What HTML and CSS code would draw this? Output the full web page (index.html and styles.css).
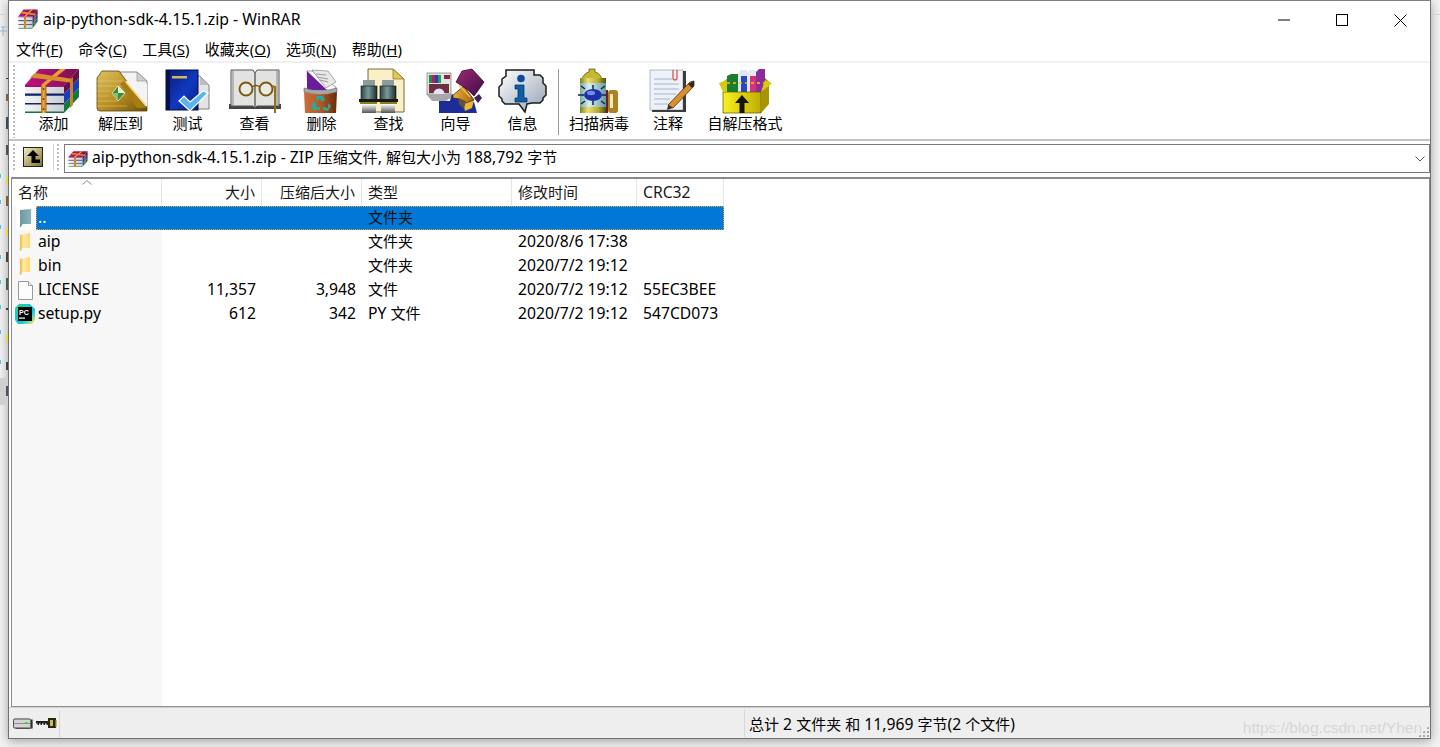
FILE: index.html
```html
<!DOCTYPE html>
<html lang="zh-CN">
<head>
<meta charset="utf-8">
<title>aip-python-sdk-4.15.1.zip - WinRAR</title>
<link rel="stylesheet" href="styles.css">
</head>
<body>
<svg class="defs" width="0" height="0" aria-hidden="true">
  <defs>
    <linearGradient id="gMag" x1="0" y1="0" x2="1" y2="0"><stop offset="0" stop-color="#c0127e"/><stop offset="1" stop-color="#7a1050"/></linearGradient>
    <linearGradient id="gStrap" x1="0" y1="0" x2="1" y2="0"><stop offset="0" stop-color="#b86c10"/><stop offset=".5" stop-color="#f0b040"/><stop offset="1" stop-color="#a86010"/></linearGradient>
    <linearGradient id="gPage" x1="0" y1="0" x2="1" y2="0"><stop offset="0" stop-color="#f4f4f4"/><stop offset="1" stop-color="#c8ccd4"/></linearGradient>
    <linearGradient id="gGold" x1="0" y1="0" x2="1" y2="1"><stop offset="0" stop-color="#dcc060"/><stop offset=".55" stop-color="#b88c20"/><stop offset="1" stop-color="#6c4e08"/></linearGradient>
    <linearGradient id="gNavy" x1="0" y1="0" x2="1" y2="1"><stop offset="0" stop-color="#0a1a70"/><stop offset=".55" stop-color="#1038c0"/><stop offset="1" stop-color="#082080"/></linearGradient>
    <linearGradient id="gBin" x1="0" y1="0" x2="1" y2="0"><stop offset="0" stop-color="#c87040"/><stop offset=".5" stop-color="#b05828"/><stop offset="1" stop-color="#682c0a"/></linearGradient>
    <linearGradient id="gBino" x1="0" y1="0" x2="1" y2="0"><stop offset="0" stop-color="#2c4444"/><stop offset=".45" stop-color="#7a9a9a"/><stop offset="1" stop-color="#1c2c2c"/></linearGradient>
    <linearGradient id="gLens" x1="0" y1="0" x2="0" y2="1"><stop offset="0" stop-color="#fff"/><stop offset="1" stop-color="#555"/></linearGradient>
    <linearGradient id="gBubble" x1="0" y1="0" x2="1" y2="1"><stop offset="0" stop-color="#fff"/><stop offset="1" stop-color="#94a2b4"/></linearGradient>
    <linearGradient id="gCan" x1="0" y1="0" x2="1" y2="0"><stop offset="0" stop-color="#80801c"/><stop offset=".3" stop-color="#e8e070"/><stop offset=".7" stop-color="#b8ac30"/><stop offset="1" stop-color="#505008"/></linearGradient>
    <linearGradient id="gLabel" x1="0" y1="0" x2="1" y2="0"><stop offset="0" stop-color="#78a8a0"/><stop offset=".35" stop-color="#d8f0f0"/><stop offset="1" stop-color="#6898a0"/></linearGradient>
    <linearGradient id="gTurban" x1="0" y1="0" x2="1" y2="1"><stop offset="0" stop-color="#a02878"/><stop offset="1" stop-color="#400c48"/></linearGradient>
    <linearGradient id="gFace" x1="0" y1="0" x2="1" y2="0"><stop offset="0" stop-color="#f0b040"/><stop offset="1" stop-color="#a06010"/></linearGradient>
    <linearGradient id="gBox" x1="0" y1="0" x2="1" y2="0"><stop offset="0" stop-color="#f8f020"/><stop offset="1" stop-color="#c0ae00"/></linearGradient>
    <linearGradient id="gFolder" x1="0" y1="0" x2="1" y2="0"><stop offset="0" stop-color="#e8b848"/><stop offset=".35" stop-color="#ffe9a0"/><stop offset="1" stop-color="#fbd877"/></linearGradient>
    <linearGradient id="gUpFolder" x1="0" y1="0" x2="1" y2="0"><stop offset="0" stop-color="#6c9aa0"/><stop offset="1" stop-color="#8ab4b8"/></linearGradient>
    <linearGradient id="gUp" x1="0" y1="0" x2="1" y2="1"><stop offset="0" stop-color="#f4eec0"/><stop offset="1" stop-color="#807028"/></linearGradient>
    <linearGradient id="gPcHex" x1="0" y1="0" x2="1" y2="1"><stop offset="0" stop-color="#21d789"/><stop offset=".6" stop-color="#07c3f2"/><stop offset="1" stop-color="#fcf84a"/></linearGradient>

    <symbol id="rar" viewBox="0 0 56 46" preserveAspectRatio="none">
      <path d="M1 17 15 1h40l-15 16z" fill="url(#gMag)"/>
      <path d="M40 17 55 1v9L40 26z" fill="#6a1048"/>
      <path d="M40 26 55 10v10L40 36z" fill="#1c3cb8"/>
      <path d="M40 36 55 20v9L40 45z" fill="#107a3c"/>
      <rect x="1" y="17" width="39" height="28" fill="url(#gPage)"/>
      <rect x="1" y="17" width="39" height="2" fill="#a81070"/>
      <rect x="1" y="25.500" width="39" height="1.500" fill="#23234a"/>
      <rect x="1" y="27" width="39" height="1" fill="#3050b0"/>
      <rect x="1" y="35" width="39" height="1.500" fill="#23234a"/>
      <rect x="1" y="43.500" width="39" height="1.500" fill="#1e7040"/>
      <path d="M36 1h6L22 17h-5z" fill="#e8a030"/>
      <path d="M6 9.500 11 5l38 6-3 3.500z" fill="#d8902c"/>
      <rect x="17" y="17" width="5.500" height="28" fill="url(#gStrap)"/>
      <path d="M46 12l3-3v28l-3 3z" fill="#c88428"/>
      <circle cx="19.500" cy="21" r="1" fill="#704008"/><circle cx="19.500" cy="31" r="1" fill="#704008"/><circle cx="19.500" cy="41" r="1" fill="#704008"/>
    </symbol>

    <symbol id="ico-extract" viewBox="0 0 56 46">
      <path d="M27 4h17l10 9v26L27 12z" fill="#f2f2f2" stroke="#8a8a8a"/>
      <path d="M44 4v9h10z" fill="#cfcfcf" stroke="#8a8a8a" stroke-width=".6"/>
      <path d="M4 10 9 3h17l6 8 22 28v4H7q-3 0-3-3z" fill="url(#gGold)" stroke="#5a4408" stroke-width=".8"/>
      <path d="M4 13h26M4 18h28M4 23h14M4 28h12M4 33h20M4 38h30" stroke="#e8d490" stroke-width=".8" opacity=".6"/>
      <path d="M32 13 54 16v23z" fill="#f4f4f4"/>
      <path d="M31 13 53 40h-9L27 16z" fill="#a87c14"/>
      <path d="M33 14 53 38" stroke="#f0d878" stroke-width="1.500"/>
      <path d="M19 25 25 18l7 7-7 8z" fill="#3c8a3c" stroke="#f0f0e0" stroke-width=".8"/>
      <path d="M25 18l7 7h-7z" fill="#e4f4d8"/>
      <path d="M19 25h6v8z" fill="#88c068"/>
    </symbol>

    <symbol id="ico-test" viewBox="0 0 56 46">
      <path d="M34 8h6l9 9v24H34z" fill="#e4e4e4" stroke="#808080"/>
      <path d="M40 8v9h9z" fill="#bcbcbc"/>
      <rect x="6" y="2" width="32" height="40" fill="url(#gNavy)" stroke="#040c48"/>
      <rect x="6" y="2" width="4" height="40" fill="#06104c"/>
      <rect x="12" y="8" width="15" height="2.500" fill="#d0b860"/>
      <path d="M19 33 24 28l6 6 13-11 5 2-18 18z" fill="#5ab4f0" stroke="#fff" stroke-width="1.200"/>
    </symbol>

    <symbol id="ico-view" viewBox="0 0 56 46">
      <rect x="2" y="36" width="52" height="5" fill="#444"/>
      <path d="M4 2h22l2 3 2-3h22v36H30l-2 2-2-2H4z" fill="#e2e2e0" stroke="#555"/>
      <path d="M28 5v34" stroke="#666" stroke-width="1.500"/>
      <path d="M6 2v36M50 2v36" stroke="#888"/>
      <circle cx="19" cy="21" r="6.500" fill="#f4f4ec" fill-opacity=".5" stroke="#7a5c10" stroke-width="2"/>
      <circle cx="39" cy="21" r="6.500" fill="#f4f4ec" fill-opacity=".5" stroke="#7a5c10" stroke-width="2"/>
      <path d="M25 19q4-3 8 0" fill="none" stroke="#7a5c10" stroke-width="1.500"/>
      <path d="M45 18l3 1v26" fill="none" stroke="#907018" stroke-width="2"/>
    </symbol>

    <symbol id="ico-delete" viewBox="0 0 56 46">
      <path d="M13 3h5l24 16-3 7H14z" fill="#fff" stroke="#666" stroke-width=".6"/>
      <path d="M13 3l20 19H13z" fill="#6a1c9c"/>
      <path d="M18 2 34 3l8 11-10 6z" fill="#e8e8e8" stroke="#888" stroke-width=".7"/>
      <path d="M22 6l10 1M23 9l11 2M26 12l8 2" stroke="#999"/>
      <path d="M10 20q16 5 33 0v4q-16 5-33 0z" fill="#a8a8a8" stroke="#666" stroke-width=".6"/>
      <path d="M10 24q16 5 33 0l-1 21H11z" fill="url(#gBin)"/>
      <path d="M22 28h7l2 4-3 2-2-3-3 2zM17 38l3-5 3 3-2 3h5v3h-7zM34 35l3 3-3 5-5-1v-3l5 1z" fill="#30a890"/>
    </symbol>

    <symbol id="ico-find" viewBox="0 0 56 46">
      <path d="M9 1h25l11 10v33H9z" fill="#fbefc8" stroke="#776a40"/>
      <path d="M34 1v10h11z" fill="#e8c848" stroke="#776a40" stroke-width=".7"/>
      <rect x="4" y="12" width="12" height="7" fill="#8a9c9c"/><rect x="23" y="12" width="12" height="7" fill="#8a9c9c"/>
      <rect x="2" y="18" width="16" height="16" fill="url(#gBino)" stroke="#101010" stroke-width=".6"/>
      <rect x="21" y="18" width="16" height="16" fill="url(#gBino)" stroke="#101010" stroke-width=".6"/>
      <rect x="0" y="31" width="39" height="3" fill="#1a1a10"/>
      <rect x="1" y="34" width="17" height="2" fill="#8a8020"/><rect x="21" y="34" width="17" height="2" fill="#8a8020"/>
      <rect x="3" y="36" width="14" height="9" fill="url(#gLens)"/><rect x="22" y="36" width="14" height="9" fill="url(#gLens)"/>
    </symbol>

    <symbol id="ico-wizard" viewBox="0 0 60 46">
      <rect x="1" y="5" width="24" height="21" fill="#e4e4d8" stroke="#777" stroke-width=".7"/>
      <rect x="3" y="7" width="3" height="8" fill="#1c8c48"/><rect x="6" y="7" width="3" height="8" fill="#c02050"/><rect x="9" y="7" width="3" height="8" fill="#2040c0"/><rect x="12" y="7" width="3" height="8" fill="#20a060"/>
      <rect x="18" y="7" width="6" height="4" fill="#902050"/>
      <rect x="3" y="16" width="20" height="9" fill="#6c3040"/>
      <circle cx="13" cy="26" r="5.500" fill="#e8e0f8"/>
      <path d="M0 26h26v3L20 33H6z" fill="#a8a8a8"/>
      <path d="M13 33h12v12H13z" fill="#1c2c90"/>
      <path d="M26 26l10 8 12 0 3 11H20z" fill="#1c2c98"/>
      <path d="M36 32h12l-2 8-7 3z" fill="#e8b838"/>
      <path d="M27 27 38 18l10 14-8 3-6-4-7-1z" fill="url(#gFace)" stroke="#3a2008" stroke-width=".7"/>
      <path d="M32 30l8 3-2 8-5-5z" fill="#605040"/>
      <path d="M30 14 36 3l10-2 12 13-7 10-3 4-6-6z" fill="url(#gTurban)" stroke="#200420" stroke-width=".7"/>
      <path d="M33 17 44 29" stroke="#e8c040" stroke-width="1.500"/>
      <path d="M48 30l5-4 3 4-4 5z" fill="#40205c"/>
    </symbol>

    <symbol id="ico-info" viewBox="0 0 56 46">
      <path d="M13 2h28v5h6l3 3v5l3 3v9l-3 3v2l-3 3h-8l-5 1-2 8-6-8H12l-3-3v-2l-3-3v-9l3-3v-5l4-3z" fill="url(#gBubble)" stroke="#1c1c1c" stroke-width="1.500"/>
      <circle cx="28" cy="10.500" r="3.800" fill="#10489c"/>
      <path d="M22 17h9v13h3v4H22v-4h3v-9h-3z" fill="#0c60a8" stroke="#082860" stroke-width=".7"/>
    </symbol>

    <symbol id="ico-scan" viewBox="0 0 56 46">
      <path d="M11 11q2-6 7-7V1h6v3q5 1 7 7z" fill="#c8b830" stroke="#4a4808" stroke-width=".7"/>
      <rect x="9" y="10" width="26" height="35" fill="url(#gCan)"/>
      <rect x="9" y="15" width="26" height="24" fill="url(#gLabel)"/>
      <ellipse cx="22" cy="27" rx="9" ry="6" fill="#1c30a8"/>
      <ellipse cx="20" cy="25" rx="4" ry="2.200" fill="#7090f0"/>
      <path d="M14 21l-4-3M22 21v-4M30 21l4-3M13 27H7M31 27h6M14 33l-4 3M22 33v4M30 33l4 3" stroke="#182050" stroke-width="1.500"/>
      <rect x="35" y="22" width="2" height="23" fill="#6a1c28"/>
      <rect x="37" y="22" width="10" height="23" rx="3" fill="#b08020"/>
      <rect x="39" y="26" width="3" height="14" fill="#e8f0c0"/>
    </symbol>

    <symbol id="ico-note" viewBox="0 0 56 46">
      <rect x="12" y="4" width="2" height="40" fill="#555"/>
      <path d="M10 2h33v40H10z" fill="#eef2f8" stroke="#a0a8b4" stroke-width=".8"/>
      <path d="M43 3h3v41H12v-2h31z" fill="#3c3c3c"/>
      <path d="M14 11h18M14 16h25M14 21h25M14 26h22M14 31h16M14 36h14" stroke="#9cb4d0"/>
      <path d="M33 2v8q0 2 2 2t2-2V2" fill="none" stroke="#d05040" stroke-width="1.200"/>
      <path d="M28 37 50 14l4-1v5L33 40z" fill="#d89030" stroke="#4a2c08" stroke-width=".8"/>
      <path d="M28 37l5 3-6 2z" fill="#333"/>
      <path d="M48 16l4 4 2-2v-5z" fill="#2a2a2a"/>
    </symbol>

    <symbol id="ico-sfx" viewBox="0 0 56 46">
      <path d="M6 14 14 8h32l6 6-6 9H12z" fill="#8a7400"/>
      <path d="M10 8l4-2h7v20H10z" fill="#1c7c30"/>
      <path d="M21 6l3-4h6v24h-9z" fill="#e4e4f0"/>
      <path d="M24 8h6v18h-6z" fill="#2848c0"/>
      <path d="M30 4l3-2h6v24h-9z" fill="#e8e8f0"/>
      <path d="M33 8h6v18h-6z" fill="#d83080"/>
      <path d="M39 4l3-3h6v24h-9z" fill="#8c2c9c"/>
      <path d="M10 15h38" stroke="#f0c820" stroke-width="1.600" stroke-dasharray="3 3"/>
      <path d="M6 24h38v21H6z" fill="url(#gBox)" stroke="#5a5000" stroke-width=".7"/>
      <path d="M44 24l8-8v20l-8 9z" fill="#a89400"/>
      <path d="M2 15 10 12v12H6zM44 24l4-12 7 3-3 3z" fill="#d8c810"/>
      <path d="M18 35l7-8 7 8h-4.500v10h-5V35z" fill="#141408"/>
    </symbol>
  </defs>
</svg>

<svg class="desk-marks" width="8" height="747" viewBox="0 0 8 747" aria-hidden="true">
  <rect x="0" y="14" width="8" height="1" fill="#d0d0d0"/>
  <path d="M1 27h5M3 27v9M0 31h7" stroke="#9cb0c4" fill="none"/>
  <rect x="0" y="378" width="8" height="27" fill="#d0d0d0"/>
  <rect x="6" y="78" width="2" height="1" fill="#5a3010"/><rect x="6" y="94" width="2" height="7" fill="#806040"/>
  <rect x="6" y="117" width="2" height="12" fill="#3a4a60"/><rect x="6" y="145" width="2" height="10" fill="#505050"/>
  <rect x="0" y="174" width="1" height="4" fill="#40c8f0"/><rect x="6" y="177" width="2" height="7" fill="#e8d840"/>
  <rect x="0" y="200" width="1" height="4" fill="#40c8f0"/><rect x="6" y="196" width="2" height="10" fill="#806030"/>
  <rect x="0" y="225" width="1" height="4" fill="#40c8f0"/><rect x="6" y="228" width="2" height="8" fill="#e8d840"/>
  <rect x="0" y="255" width="1" height="4" fill="#40c8f0"/><rect x="6" y="252" width="2" height="10" fill="#504030"/>
  <rect x="0" y="280" width="1" height="4" fill="#40c8f0"/><rect x="6" y="278" width="2" height="12" fill="#406050"/>
  <rect x="0" y="305" width="1" height="4" fill="#40c8f0"/><rect x="6" y="308" width="2" height="2" fill="#3a3a3a"/>
  <rect x="0" y="330" width="1" height="4" fill="#40c8f0"/><rect x="6" y="334" width="2" height="8" fill="#e8d840"/>
  <rect x="0" y="360" width="1" height="4" fill="#40c8f0"/><rect x="6" y="362" width="2" height="8" fill="#404040"/>
  <rect x="6" y="386" width="2" height="10" fill="#505060"/>
</svg>
<svg class="desk-line" width="9" height="2" viewBox="0 0 9 2" aria-hidden="true"><rect width="9" height="1" fill="#d4d4d4"/></svg>

<main class="window">
  <header class="titlebar">
    <svg class="title-icon" width="20" height="20"><use href="#rar"/></svg>
    <h1 class="title-text">aip-python-sdk-4.15.1.zip - WinRAR</h1>
    <div class="caption">
      <button class="cap-btn" aria-label="最小化"><svg width="12" height="12" viewBox="0 0 12 12"><path d="M0 6h12" stroke="#000" stroke-width="1"/></svg></button>
      <button class="cap-btn" aria-label="最大化"><svg width="12" height="12" viewBox="0 0 12 12"><rect x=".5" y=".5" width="11" height="11" fill="none" stroke="#000"/></svg></button>
      <button class="cap-btn" aria-label="关闭"><svg width="13" height="13" viewBox="0 0 13 13"><path d="M.5.500l12 12M12.500.500l-12 12" stroke="#000" fill="none"/></svg></button>
    </div>
  </header>

  <nav class="menubar">
    <span>文件(<u>F</u>)</span><span>命令(<u>C</u>)</span><span>工具(<u>S</u>)</span><span>收藏夹(<u>O</u>)</span><span>选项(<u>N</u>)</span><span>帮助(<u>H</u>)</span>
  </nav>

  <section class="toolbar">
    <i class="gripper"></i>
    <div class="tool"><svg class="tool-icon tool-icon-left" viewBox="0 0 56 46"><use href="#rar"/></svg><span>添加</span></div>
    <div class="tool"><svg class="tool-icon" viewBox="0 0 56 46"><use href="#ico-extract"/></svg><span>解压到</span></div>
    <div class="tool"><svg class="tool-icon" viewBox="0 0 56 46"><use href="#ico-test"/></svg><span>测试</span></div>
    <div class="tool"><svg class="tool-icon" viewBox="0 0 56 46"><use href="#ico-view"/></svg><span>查看</span></div>
    <div class="tool"><svg class="tool-icon" viewBox="0 0 56 46"><use href="#ico-delete"/></svg><span>删除</span></div>
    <div class="tool"><svg class="tool-icon tool-icon-left" viewBox="0 0 56 46"><use href="#ico-find"/></svg><span>查找</span></div>
    <div class="tool"><svg class="tool-icon-w" viewBox="0 0 60 46"><use href="#ico-wizard"/></svg><span>向导</span></div>
    <div class="tool"><svg class="tool-icon tool-icon-left" viewBox="0 0 56 46"><use href="#ico-info"/></svg><span>信息</span></div>
    <i class="tool-sep"></i>
    <div class="tool tool-scan"><svg class="tool-icon" viewBox="0 0 56 46"><use href="#ico-scan"/></svg><span>扫描病毒</span></div>
    <div class="tool tool-note"><svg class="tool-icon" viewBox="0 0 56 46"><use href="#ico-note"/></svg><span>注释</span></div>
    <div class="tool tool-sfx"><svg class="tool-icon" viewBox="0 0 56 46"><use href="#ico-sfx"/></svg><span>自解压格式</span></div>
  </section>

  <section class="addressbar">
    <i class="gripper"></i>
    <div class="up-wrap">
      <svg class="up-btn" width="20" height="20" viewBox="0 0 20 20"><rect x=".5" y=".5" width="19" height="19" fill="url(#gUp)" stroke="#222"/><path d="M10 3 16 9h-3.500v3.500H17V16H8.500V9H4z" fill="#000"/></svg>
    </div>
    <i class="addr-sep"></i>
    <i class="gripper"></i>
    <div class="combo">
      <svg class="combo-icon" width="20" height="16"><use href="#rar"/></svg>
      <span class="combo-text">aip-python-sdk-4.15.1.zip - ZIP <span class="cjk">压缩文件</span>, <span class="cjk">解包大小为</span> 188,792 <span class="cjk">字节</span></span>
      <svg class="chevron" width="10" height="6" viewBox="0 0 10 6"><path d="M.5.500 5 5 9.500.500" fill="none" stroke="#555"/></svg>
    </div>
  </section>

  <section class="list">
    <div class="list-head">
      <div class="hcell hcell-name">名称<svg class="sort" width="10" height="5" viewBox="0 0 10 5"><path d="M.5 4.500 5 .5l4.500 4" fill="none" stroke="#888"/></svg></div>
      <div class="hcell hcell-num">大小</div>
      <div class="hcell hcell-num">压缩后大小</div>
      <div class="hcell hcell-type">类型</div>
      <div class="hcell hcell-time">修改时间</div>
      <div class="hcell hcell-crc">CRC32</div>
    </div>

    <div class="row">
      <div class="row-icon row-icon-sel"><svg width="13" height="18" viewBox="0 0 14 18" preserveAspectRatio="none"><path d="M0 1l12-1v15l-9 0-2 3H0z" fill="url(#gUpFolder)"/></svg></div>
      <div class="cells cells-sel"><span class="c-name c-name-sel">..</span><span></span><span></span><span class="c-type"><span class="cjk">文件夹</span></span><span></span><span></span></div>
    </div>
    <div class="row">
      <div class="row-icon"><svg width="13" height="18" viewBox="0 0 14 18" preserveAspectRatio="none"><path d="M1 2l11-2v15H4l-2 3H1z" fill="url(#gFolder)"/></svg></div>
      <div class="cells"><span class="c-name">aip</span><span></span><span></span><span class="c-type"><span class="cjk">文件夹</span></span><span class="c-time">2020/8/6 17:38</span><span></span></div>
    </div>
    <div class="row">
      <div class="row-icon"><svg width="13" height="18" viewBox="0 0 14 18" preserveAspectRatio="none"><path d="M1 2l11-2v15H4l-2 3H1z" fill="url(#gFolder)"/></svg></div>
      <div class="cells"><span class="c-name">bin</span><span></span><span></span><span class="c-type"><span class="cjk">文件夹</span></span><span class="c-time">2020/7/2 19:12</span><span></span></div>
    </div>
    <div class="row">
      <div class="row-icon"><svg width="15" height="19" viewBox="0 0 15 19"><path d="M.5.500h10l4 4v14H.5z" fill="#fdfdfd" stroke="#9a9a9a"/><path d="M10.500.500v4h4" fill="#eee" stroke="#9a9a9a"/></svg></div>
      <div class="cells"><span class="c-name">LICENSE</span><span class="c-num">11,357</span><span class="c-num">3,948</span><span class="c-type"><span class="cjk">文件</span></span><span class="c-time">2020/7/2 19:12</span><span class="c-crc">55EC3BEE</span></div>
    </div>
    <div class="row">
      <div class="row-icon"><svg class="pc-icon" width="20" height="20" viewBox="0 0 20 20"><path d="M4 0h11l5 5v11l-3 4H3l-3-4V4z" fill="url(#gPcHex)"/><rect x="3" y="3" width="14" height="14" fill="#000"/><text x="4" y="10.500" class="pc-text">PC</text><rect x="4" y="13.500" width="6" height="1.200" fill="#fff"/></svg></div>
      <div class="cells"><span class="c-name">setup.py</span><span class="c-num">612</span><span class="c-num">342</span><span class="c-type">PY <span class="cjk">文件</span></span><span class="c-time">2020/7/2 19:12</span><span class="c-crc">547CD073</span></div>
    </div>
  </section>

  <footer class="statusbar">
    <div class="status-icons">
      <svg width="20" height="13" viewBox="0 0 22 13"><rect x=".5" y="1.500" width="19" height="10" rx="1.500" fill="#d4d4d4" stroke="#333"/><rect x="1" y="6" width="18" height="1" fill="#888"/><rect x="13" y="5" width="3" height="2" fill="#20e020"/><path d="M20 2h1.500v10H3v-.5h17z" fill="#111"/></svg>
      <svg width="21" height="11" viewBox="0 0 21 11"><path d="M0 3h12v4h-1.500V5.500h-1.500V7H7.500V5.500H6V7H4.500V5.500H3V7H1.500V5.500H0z" fill="#222"/><rect x="12" y="0" width="8" height="10" fill="#2a2410"/><rect x="14" y="2" width="3" height="6" fill="#c8b860"/><rect x="19.500" y="2" width="1.500" height="7" fill="#c8b860"/></svg>
    </div>
    <div class="status-mid"></div>
    <div class="status-text"><span class="cjk">总计</span> 2 <span class="cjk">文件夹</span> <span class="cjk">和</span> 11,969 <span class="cjk">字节</span>(2 <span class="cjk">个文件</span>)</div>
    <div class="grip"></div>
    <div class="watermark">https://blog.csdn.net/Yhen</div>
  </footer>
</main>
</body>
</html>
```

FILE: styles.css
```css
* { box-sizing: border-box; }
html, body { margin: 0; height: 100%; }
body {
  position: relative;
  overflow: hidden;
  background: #f3f3f3;
  font-family: "Noto Sans", "Noto Sans CJK SC", sans-serif;
  font-size: 15px;
  color: #000;
}
.cjk { font-size: 15px; }
.defs { position: absolute; }
.desk-marks { position: absolute; left: 0; top: 0; }
.desk-line { position: absolute; right: 0; top: 14px; }

.window {
  width: 1423px;
  height: 739px;
  margin-left: 8px;
  border: 1px solid #707070;
  border-top-color: #808080;
  background: #fff;
  display: flex;
  flex-direction: column;
  box-shadow: 0 2px 10px rgba(0, 0, 0, .35);
}

.titlebar { height: 39px; display: flex; align-items: flex-start; padding: 8px 0 0 9px; flex: none; }
.title-icon { margin-right: 5px; flex: none; }
.title-text { margin: 0; font-size: 15.800px; line-height: 21px; font-weight: 400; flex: 1; white-space: nowrap; }
.caption { display: flex; margin-top: -4px; }
.cap-btn {
  width: 58.500px; height: 30px; padding: 0;
  display: flex; align-items: center; justify-content: center;
  background: none; border: 0;
}

.menubar {
  height: 23px; flex: none;
  display: flex; gap: 15.400px;
  padding: 0 0 3px 7px;
  align-items: center;
  border-bottom: 2px solid #f0f0f0;
  white-space: nowrap;
}
.menubar span { line-height: 18px; }
.menubar u { text-underline-offset: 1px; }

.toolbar {
  height: 78px; flex: none;
  display: flex;
  padding: 2px 0 0 4px;
  border-bottom: 2px solid #c4c4c4;
}
.gripper {
  width: 2px; flex: none;
  margin: 0 5px 1px 0;
  background: repeating-linear-gradient(#c0c0c0 0 2px, transparent 2px 4px);
}
.tool {
  width: 67px; flex: none;
  display: flex; flex-direction: column; align-items: center;
  white-space: nowrap;
}
.tool span { line-height: 20px; margin-top: -1px; }
.tool-icon { width: 56px; height: 46px; flex: none; margin-top: 3px; }
.tool-icon-left { margin-left: -4px; }
.tool-icon-w { width: 60px; height: 46px; flex: none; margin-top: 3px; }
.tool-sep { width: 1px; height: 66px; margin: 4px 0 0 2px; background: #9a9a9a; flex: none; }
.tool-scan { width: 80px; }
.tool-note { width: 58px; }
.tool-sfx { width: 96px; }

.addressbar {
  height: 34px; flex: none;
  display: flex; align-items: stretch;
  padding: 3px 0 0 4px;
}
.up-wrap { width: 33px; padding: 3px 0 0 3px; flex: none; }
.up-btn { display: block; }
.addr-sep { width: 1px; height: 26px; background: #d0d0d0; margin-right: 3px; flex: none; }
.addressbar .gripper { margin-right: 5px; height: 26px; }
.combo {
  flex: 1; height: 29px;
  display: flex; align-items: center;
  padding: 0 4px 0 3px;
  border: 1px solid #7a7a7a;
  white-space: nowrap;
}
.combo-icon { flex: none; margin-right: 4px; }
.combo-text { flex: 1; font-size: 15.700px; line-height: 24px; margin-top: -3px; }

.list {
  flex: 1; min-height: 0;
  margin: 2px 0 0 2px;
  border: 1px solid #8a8a8a;
  border-top: 2px solid #8a8a8a;
  border-bottom: 1px solid #909090;
  background: linear-gradient(90deg, #f7f7f7 150px, #fff 150px);
  white-space: nowrap;
}
.list-head {
  height: 27px; width: 712px;
  display: grid;
  grid-template-columns: 150px 100px 100px 150px 125px 87px;
}
.hcell {
  position: relative;
  padding: 0 6px;
  line-height: 26px;
  border-right: 1px solid #e5e5e5;
  background: #fff;
  color: #1a1a1a;
}
.hcell-num { text-align: right; }
.hcell-crc { font-size: 15.700px; }
.sort { position: absolute; left: 70px; top: 1px; }

.row { display: flex; height: 24px; width: 712px; }
.row-icon {
  width: 24px; flex: none;
  display: flex; align-items: center; justify-content: center;
  padding-left: 2px;
}
.row-icon-sel { background: #fff; margin-left: 4px; width: 20px; padding: 0; }
.cells {
  flex: 1;
  display: grid;
  grid-template-columns: 126px 100px 100px 150px 125px 87px;
  font-size: 15.700px;
  line-height: 22px;
}
.cells-sel {
  background: #0078d7;
  color: #111;
  outline: 1px dotted #f0a030;
  outline-offset: -1px;
}
.c-name { padding-left: 2px; }
.c-name-sel { color: #fff; }
.c-num { text-align: right; padding-right: 6px; }
.c-type, .c-time, .c-crc { padding-left: 6px; }
.pc-text { font-family: "Liberation Sans", sans-serif; font-size: 7px; font-weight: 700; fill: #fff; }

.statusbar {
  position: relative;
  height: 31px; flex: none;
  display: flex;
  background: #eeeeee;
  border-top: 1px solid #d0d0d0;
  white-space: nowrap;
}
.status-icons {
  width: 51px; margin-top: 2px;
  display: flex; align-items: center; gap: 3px;
  padding-left: 4px;
  flex: none;
  border-right: 1px solid #d8d8d8;
  height: 27px;
}
.status-mid { width: 685px; flex: none; height: 27px; margin-top: 2px; border-right: 1px solid #d8d8d8; }
.status-text { padding-left: 4px; font-size: 15.700px; line-height: 33px; }
.grip {
  position: absolute; right: 1px; bottom: 1px;
  width: 11px; height: 11px;
  background: radial-gradient(circle, #a8a8a8 1.400px, transparent 1.500px) 0 0 / 4px 4px;
  clip-path: polygon(100% 0, 100% 100%, 0 100%);
}
.watermark {
  position: absolute; right: 8px; top: 11px;
  font-family: "Liberation Sans", sans-serif;
  font-size: 15.500px;
  color: #d6d6d6;
}
```
